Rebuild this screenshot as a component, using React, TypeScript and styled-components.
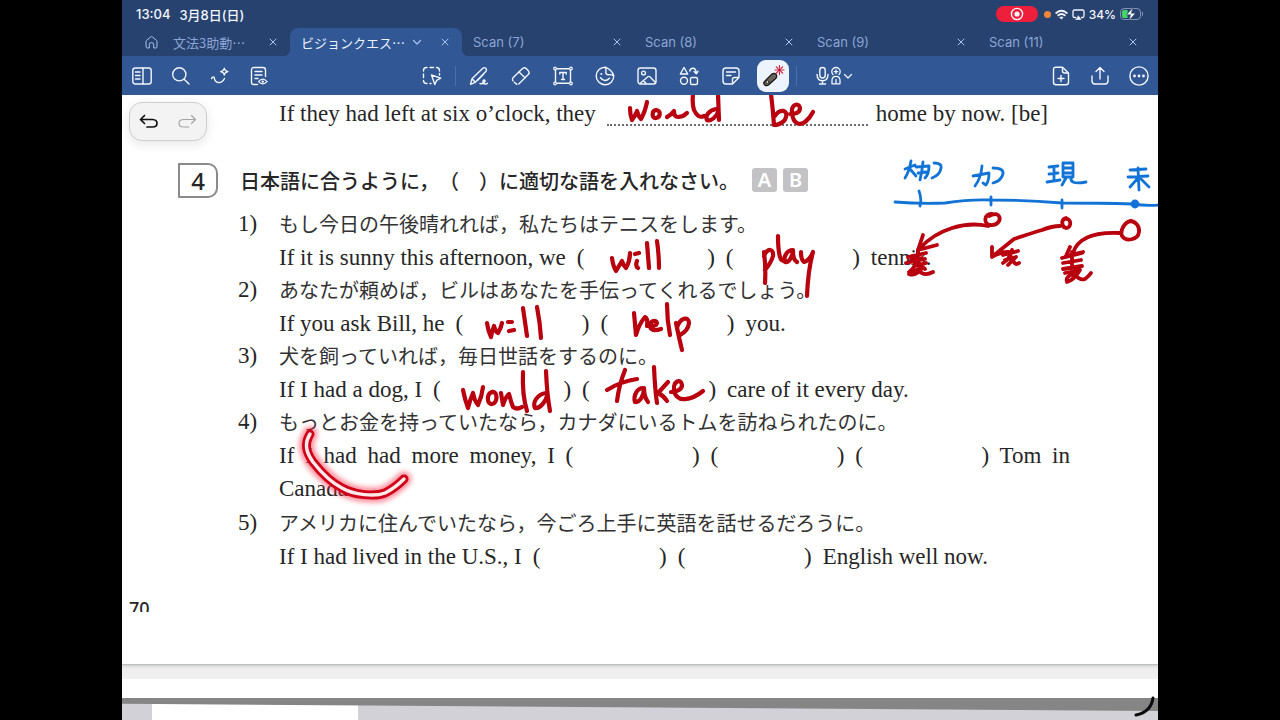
import React from "react";
import styled, { createGlobalStyle, css } from "styled-components";

const GlobalStyle = createGlobalStyle`
  * { box-sizing: border-box; }
  body { margin: 0; background: #000; }
  button { font: inherit; color: inherit; background: none; border: 0; padding: 0; }
`;

const uiFont = `Inter, "Noto Sans CJK JP", sans-serif`;
const jpFont = `"Noto Sans CJK JP", sans-serif`;
const bookFont = `"Liberation Serif", "Noto Sans CJK JP", serif`;

const Screen = styled.div`
  display: flex;
  flex-direction: column;
  max-width: 1036px;
  height: 100vh;
  min-height: 720px;
  margin: 0 auto;
  overflow: hidden;
  background: #fff;
`;

const Header = styled.header`
  flex: none;
  background: #28426f;
  color: #f2f6fd;
  font-family: ${uiFont};
`;

const StatusBar = styled.div`
  display: flex;
  align-items: center;
  justify-content: space-between;
  height: 28px;
  padding: 0 14px;
  font-size: 13px;
  font-weight: 500;
`;

const StatusGroup = styled.div<{ $gap: number }>`
  display: flex;
  align-items: center;
  gap: ${(p) => p.$gap}px;
`;

const RecordPill = styled.button`
  display: grid;
  place-items: center;
  width: 42px;
  height: 16px;
  margin-right: 2px;
  border-radius: 8px;
  background: #ee1f3b;
`;

const MicDot = styled.span`
  width: 7px;
  height: 7px;
  border-radius: 50%;
  background: #f0883a;
`;

const Charge = styled.span`
  font-size: 12px;
`;

const TabBar = styled.nav`
  display: grid;
  grid-template-columns: 168fr repeat(5, 172fr);
  height: 28px;
  padding-right: 8px;
`;

const flare = css`
  content: "";
  position: absolute;
  bottom: 0;
  width: 6px;
  height: 6px;
`;

const Tab = styled.div<{ $active?: boolean; $home?: boolean }>`
  position: relative;
  display: flex;
  align-items: center;
  gap: ${(p) => (p.$home ? 14 : 7)}px;
  min-width: 0;
  padding: 0 12px 0 ${(p) => (p.$home ? 22 : 11)}px;
  border-radius: 8px 8px 0 0;
  font-size: 13px;
  color: ${(p) => (p.$active ? "#eaf3ff" : "#8aa5d6")};
  background: ${(p) => (p.$active ? "#315795" : "transparent")};
  ${(p) =>
    p.$active &&
    css`
      &::before {
        ${flare}
        right: 100%;
        background: radial-gradient(circle at 0 0, transparent 6px, #315795 6px);
      }
      &::after {
        ${flare}
        left: 100%;
        background: radial-gradient(circle at 100% 0, transparent 6px, #315795 6px);
      }
    `}
`;

const TabName = styled.button<{ $jp?: boolean }>`
  white-space: nowrap;
  font-family: ${(p) => (p.$jp ? jpFont : uiFont)};
`;

const TabIconButton = styled.button<{ $end?: boolean }>`
  display: grid;
  place-items: center;
  flex: none;
  margin-left: ${(p) => (p.$end ? "auto" : "0")};
  color: #a9c4ee;
`;

const Toolbar = styled.div`
  display: grid;
  grid-template-columns: 1fr auto 1fr;
  align-items: center;
  height: 39px;
  background: #315795;
`;

const ToolGroup = styled.div<{ $place?: "start" | "end" | "center" }>`
  display: flex;
  align-items: center;
  justify-self: ${(p) => p.$place ?? "start"};
`;

const Tool = styled.button<{ $width?: number }>`
  display: flex;
  align-items: center;
  justify-content: center;
  width: ${(p) => p.$width ?? 39}px;
  height: 39px;
`;

const ActiveTool = styled.span`
  display: grid;
  place-items: center;
  width: 32px;
  height: 32px;
  border-radius: 9px;
  background: #eef4fd;
`;

const Divider = styled.span`
  width: 1px;
  height: 20px;
  margin: 0 2px;
  background: #4c70ad;
`;

const Canvas = styled.main`
  position: relative;
  flex: 1;
  overflow: hidden;
  background: #efefef;
`;

const Sheet = styled.article`
  height: 570px;
  padding: 2px 88px 0 116px;
  background: #fff;
  border-bottom: 1px solid #bcc0be;
  box-shadow: 0 1px 3px #c4c4c4;
  color: #262626;
  font-family: ${bookFont};
  font-size: 23px;
  line-height: 33px;
`;

const Sentence = styled.p`
  display: flex;
  gap: 11px;
  margin: 0;
  line-height: 31px;
  white-space: nowrap;
`;

const Spread = styled.p`
  margin: 0;
  line-height: 31px;
  text-align: justify;
  text-align-last: justify;
`;

const LastLine = styled.p`
  margin: 0;
  line-height: 35px;
`;

const Carried = styled.div`
  padding: 1px 0 1px 41px;
`;

const DottedBlank = styled.span`
  width: 261px;
  height: 28px;
  margin-right: -3px;
  border-bottom: 2px dotted #6d6d6d;
`;

const BlankBox = styled.span<{ $wide?: boolean }>`
  display: inline-flex;
  justify-content: space-between;
  width: ${(p) => (p.$wide ? 138 : 134)}px;
`;

const Question = styled.section`
  margin-top: 32px;
`;

const QuestionHead = styled.div`
  display: flex;
  align-items: center;
  height: 36px;
  margin-left: -60px;
`;

const QuestionNumber = styled.span`
  display: grid;
  place-items: center;
  width: 40px;
  height: 35px;
  margin-right: 22px;
  border: 2px solid #8a8a8a;
  border-radius: 1px 10px 10px 1px;
  font-family: "Noto Sans", sans-serif;
  font-size: 24px;
  font-weight: 500;
  line-height: 31px;
`;

const QuestionTitle = styled.h2`
  margin: 0;
  font-family: ${jpFont};
  font-size: 20px;
  font-weight: 500;
  text-spacing-trim: space-all;
`;

const Level = styled.span`
  display: grid;
  place-items: center;
  width: 25px;
  height: 24px;
  margin-right: 6px;
  border-radius: 3px;
  background: #c3c3c6;
  color: #fff;
  font-family: "Noto Sans", sans-serif;
  font-size: 20px;
  font-weight: 600;
  line-height: 24px;
`;

const Levels = styled.span`
  display: flex;
  margin-left: 13px;
`;

const Items = styled.ol`
  margin: 9px 0 0;
  padding: 0;
  list-style: none;
`;

const Item = styled.li`
  display: grid;
  grid-template-columns: 41px 1fr;
`;

const Japanese = styled.p`
  margin: 0;
  height: 35px;
  color: #333;
  font-family: ${jpFont};
  font-size: 20px;
  font-weight: 400;
  white-space: nowrap;
`;

const PageNumber = styled.div`
  height: 12px;
  margin: 28px 0 0 -109px;
  overflow: hidden;
  font-family: "Noto Sans", sans-serif;
  font-size: 18px;
  font-weight: 500;
  line-height: 16px;
`;

const NextSheet = styled.section`
  margin-top: 14px;
  padding-top: 19px;
  background: #fff;
`;

const ScanEdge = styled.div`
  height: 13px;
  background: #858585;
  clip-path: polygon(0 0, 100% 0, 100% 100%, 0 45%);
`;

const ScanBody = styled.div`
  height: 60px;
  margin-top: -13px;
  padding: 5px 0 0 30px;
  background: #d3d1d8;
`;

const ScanPaper = styled.div`
  width: 206px;
  height: 55px;
  background: #fff;
`;

const EdgeLayer = styled.div`
  position: relative;
  z-index: 1;
`;

const UndoPill = styled.div`
  position: absolute;
  top: 7px;
  left: 7px;
  display: flex;
  align-items: center;
  justify-content: space-around;
  width: 78px;
  height: 39px;
  border: 1px solid #cfcfcf;
  border-radius: 13px;
  background: #f3f3f3;
  box-shadow: 0 3px 12px rgba(0, 0, 0, 0.1);
  z-index: 3;
`;

const InkLayer = styled.svg`
  position: absolute;
  top: 0;
  left: 0;
  z-index: 2;
  pointer-events: none;
`;

const Glyph = styled.svg`
  display: block;
  flex: none;
  fill: none;
  stroke: currentColor;
  stroke-linecap: round;
  stroke-linejoin: round;
`;

type IconProps = { size?: number; weight?: number; children: React.ReactNode };
const Icon = ({ size = 20, weight = 1.4, children }: IconProps) => (
  <Glyph width={size} height={size} viewBox={`0 0 ${size} ${size}`} strokeWidth={weight} aria-hidden="true">
    {children}
  </Glyph>
);

const CloseIcon = () => (
  <Icon size={10} weight={1}>
    <path d="M2 2l6 6M8 2L2 8" />
  </Icon>
);

const ChevronIcon = () => (
  <Icon size={10} weight={1.2}>
    <path d="M1.500 3.500l3.500 3.500 3.500-3.500" />
  </Icon>
);

const Blank = ({ wide }: { wide?: boolean }) => (
  <BlankBox $wide={wide}>
    <span>(</span>
    <span>)</span>
  </BlankBox>
);

const scans = ["Scan (7)", "Scan (8)", "Scan (9)", "Scan (11)"];

const redStrokes = [
  // would be
  "M630 108Q630 115 632 120Q635 116 637 111Q638 116 641 119Q645 112 647 102",
  "M656 110C651 111 652 119 656 118C661 117 661 110 656 110",
  "M667 117Q671 115 674 111Q674 117 678 117Q683 117 687 113",
  "M693 94Q692 104 694 110Q698 119 704 116",
  "M718 94L719 120M716 109C709 110 705 116 707 120C711 122 717 116 718 112",
  "M771 94Q773 110 774 125M775 116C780 108 788 110 786 117C785 122 780 124 776 125",
  "M790 114Q800 114 800 108C799 102 791 104 792 113C793 124 800 126 805 122Q810 118 813 112",
  // will play
  "M612 258Q613 266 616 271Q619 266 622 261Q623 265 626 268Q630 261 630 253",
  "M635 254L639 253M637 261Q635 266 638 268",
  "M647 243L649 268M657 241Q659 255 659 268",
  "M764 252Q766 268 765 283M764 256C768 247 774 249 773 256Q771 263 765 270",
  "M778 236Q778 250 780 257Q781 261 785 261",
  "M793 250C787 250 783 257 785 262C789 263 792 257 793 251Q793 260 797 262",
  "M801 252Q801 260 804 262Q810 260 813 252Q808 270 807 296",
  // will help
  "M487 323Q488 331 491 337Q492 331 494 326Q495 331 498 333Q501 328 502 323",
  "M508 322L512 322M509 331L514 330",
  "M523 308L527 336M537 307Q540 322 541 338",
  "M634 313L636 335Q639 324 645 317Q648 318 647 326",
  "M648 326Q656 327 657 323C656 319 649 321 650 327Q652 332 661 329",
  "M667 304Q667 320 670 335",
  "M676 323Q679 338 682 350M677 328C680 317 689 316 689 323Q688 331 680 335",
  // would take
  "M463 390Q465 400 468 408Q470 400 473 393Q474 400 478 405Q482 396 483 387",
  "M492 392C486 394 487 405 492 404C498 403 498 391 492 392",
  "M501 393L503 405Q506 396 509 394Q511 402 513 407Q517 410 522 407",
  "M523 372Q522 395 527 411",
  "M546 371Q547 395 550 411M546 393C538 394 532 402 535 408C540 409 546 401 547 396",
  "M607 390Q622 381 637 379M625 370Q619 385 617 401",
  "M643 388C637 388 633 396 635 402C640 403 644 395 644 388Q644 397 648 402",
  "M654 367Q655 390 657 403M668 382L658 393Q664 396 667 401",
  "M671 392Q682 391 682 385C681 378 673 381 674 390C676 404 692 400 703 391",
];

const redNotes = [
  "M992 214C984 213 983 224 990 225C998 226 1002 219 998 215Q995 213 989 216",
  "M988 226C965 221 938 229 920 248M923 235L918 250L937 245",
  "M908 257L926 253M906 263L925 259M918 250Q918 266 909 272M913 258L925 269M915 266L926 263M910 273L923 267Q916 277 909 274M918 270Q924 277 933 272M911 260L922 258",
  "M1066 218C1061 219 1061 227 1066 228C1072 228 1072 217 1064 219",
  "M1060 226Q1052 226 1042 230Q1032 233 1014 239L993 256M992 247L992 257Q1000 252 1009 252",
  "M1003 255L1018 251M1012 250Q1011 258 1003 263M1005 260L1016 257L1008 265L1013 260Q1015 266 1019 263",
  "M1131 221C1124 222 1120 231 1122 236C1126 242 1138 240 1139 232C1140 226 1135 221 1130 221",
  "M1120 233C1098 232 1078 236 1073 253M1070 247L1066 256L1083 252",
  "M1062 258L1082 253M1063 263L1081 260M1063 269L1082 266M1072 252L1072 272M1065 273L1080 270Q1074 280 1067 282Q1065 276 1074 274Q1080 281 1085 279Q1089 276 1091 273",
];

const blueNotes = [
  "M895 202Q920 204 945 203Q970 199 992 200Q1025 200 1062 203Q1100 203 1133 204Q1145 206 1160 205",
  "M919 191Q922 199 920 206M991 197V205M1062 200V208",
  "M905 169L915 165M911 161Q909 172 905 178M910 169L916 176M916 167L929 166Q929 174 925 178M923 162Q922 172 920 180M918 173L926 172M934 163Q942 163 941 168Q940 175 932 178",
  "M973 176L989 173Q989 181 986 185L983 183M982 166Q981 178 975 186M993 168Q1004 168 1003 174Q1001 181 993 183",
  "M1049 167L1058 166M1049 174L1058 173M1047 182L1060 180M1054 167V181M1063 163V177M1063 163H1073V177M1063 168H1072M1063 173H1072M1063 177H1073M1066 178L1062 185M1071 178Q1070 185 1086 182",
  "M1130 170L1146 169M1128 177L1148 176M1138 168L1139 190M1138 178L1130 187M1140 178L1149 187",
];

const laser = "M310 434C304 444 306 452 313 462C324 476 334 484 342 488C354 495 375 497 385 493C393 489 398 485 404 479";

export default function App() {
  return (
    <>
      <GlobalStyle />
      <Screen>
        <Header>
          <StatusBar>
            <StatusGroup $gap={9}>
              <span>13:04</span>
              <span>3月8日(日)</span>
            </StatusGroup>
            <StatusGroup $gap={4}>
              <RecordPill aria-label="画面収録">
                <Icon size={14} weight={1.4}>
                  <circle cx="7" cy="7" r="5.6" />
                  <circle cx="7" cy="7" r="2.6" fill="currentColor" stroke="none" />
                </Icon>
              </RecordPill>
              <MicDot />
              <Icon size={13} weight={1.8}>
                <path d="M1.2 5Q6.500.6 11.800 5M3.300 7.300Q6.500 4.600 9.700 7.300" />
                <path d="M4.800 9.400L6.500 11.200L8.200 9.400Q6.500 8 4.800 9.400Z" fill="currentColor" strokeWidth="0.5" />
              </Icon>
              <Icon size={13} weight={1.300}>
                <path d="M3.500 9.500H2.500Q1 9.500 1 8V3.500Q1 2 2.500 2H10.500Q12 2 12 3.500V8Q12 9.500 10.500 9.500H9.500" />
                <path d="M6.500 8L9 11.500H4Z" fill="currentColor" strokeWidth="0.6" />
              </Icon>
              <Charge>34%</Charge>
              <Icon size={24} weight={1}>
                <rect x="0.5" y="6.500" width="20" height="11" rx="3.500" stroke="#7f93b4" />
                <path d="M22.500 10.500v3" stroke="#7f93b4" />
                <path d="M4 8H7.500V16H4Q2 16 2 14V10Q2 8 4 8Z" fill="#43d662" stroke="none" />
                <path d="M13 5.500L6.500 12.800H10.500L9 18.500L15.500 11.200H11.500Z" fill="#fff" stroke="#28426f" strokeWidth="0.6" />
              </Icon>
            </StatusGroup>
          </StatusBar>
          <TabBar aria-label="書類">
            <Tab $home>
              <TabIconButton aria-label="ホーム">
                <Icon size={15} weight={1}>
                  <path d="M2 6.500Q2 5.800 2.600 5.300L6.700 1.900Q7.500 1.300 8.300 1.900L12.400 5.300Q13 5.800 13 6.500V11.500Q13 13 11.500 13H9.700V9.500Q9.700 7.600 7.500 7.600Q5.300 7.600 5.300 9.500V13H3.500Q2 13 2 11.500Z" />
                </Icon>
              </TabIconButton>
              <TabName $jp>文法3助動…</TabName>
              <TabIconButton $end aria-label="閉じる">
                <CloseIcon />
              </TabIconButton>
            </Tab>
            <Tab $active>
              <TabName $jp>ビジョンクエス…</TabName>
              <TabIconButton aria-label="メニュー">
                <ChevronIcon />
              </TabIconButton>
              <TabIconButton $end aria-label="閉じる">
                <CloseIcon />
              </TabIconButton>
            </Tab>
            {scans.map((name) => (
              <Tab key={name}>
                <TabName>{name}</TabName>
                <TabIconButton $end aria-label="閉じる">
                  <CloseIcon />
                </TabIconButton>
              </Tab>
            ))}
          </TabBar>
          <Toolbar>
            <ToolGroup>
              <Tool aria-label="サイドバー">
                <Icon>
                  <rect x="0.8" y="2" width="18.400" height="16" rx="2.500" />
                  <path d="M11 2V18M3.500 6H8M3.500 9.500H8M3.500 13H8" />
                </Icon>
              </Tool>
              <Tool aria-label="検索">
                <Icon>
                  <circle cx="8.300" cy="8.300" r="6.600" />
                  <path d="M13.200 13.200L18 18" />
                </Icon>
              </Tool>
              <Tool aria-label="AI">
                <Icon>
                  <path d="M1.500 12.500Q3.800 9.500 4.300 12C5 17.500 11.500 18.500 14.500 12.500" />
                  <path d="M14.300 2.200Q14.700 5.300 18 5.700Q14.700 6.100 14.300 9.200Q13.900 6.100 10.600 5.700Q13.900 5.300 14.300 2.200Z" strokeWidth="1.200" />
                </Icon>
              </Tool>
              <Tool aria-label="ページ表示">
                <Icon>
                  <path d="M8.500 18.500H5Q2.500 18.500 2.500 16V4Q2.500 1.500 5 1.500H14Q16.500 1.500 16.500 4V10.500M6 5.500H13M6 9H13M6 12.500H9" />
                  <path d="M9.500 15.700Q13.800 10.700 18.100 15.700Q13.800 20.200 9.500 15.700Z" strokeWidth="1.200" />
                  <circle cx="13.800" cy="15.600" r="1.200" fill="currentColor" stroke="none" />
                </Icon>
              </Tool>
            </ToolGroup>
            <ToolGroup $place="center">
              <Tool $width={42} aria-label="選択">
                <Icon>
                  <path d="M1.500 5V4.500Q1.500 1.500 4.500 1.500H5M8 1.500H11.500M14.500 1.500Q17.500 1.500 17.500 4.500V5M1.500 8V11.500M17.500 7.500V9M1.500 14.500Q1.500 17.500 4.500 17.500H5M8 17.500H9" />
                  <path d="M9.500 9L18.700 12.200L14.700 14.300L12.800 18.500Z" />
                </Icon>
              </Tool>
              <Divider />
              <Tool $width={42} aria-label="ペン">
                <Icon>
                  <path d="M1.500 18.300L3 12.800L13.800 2.200Q15.300 1 16.800 2.300Q18.200 3.800 17 5.300L6.300 16.300ZM3 12.800L6.300 16.300M9 14L14.500 8.200" />
                  <path d="M11 17.500Q14 18.500 16 15.500Q16.300 13.800 15 14Q13 15 14.500 17.500Q16 18.800 18.300 17.300" />
                </Icon>
              </Tool>
              <Tool $width={42} aria-label="消しゴム">
                <Icon>
                  <path d="M2 11.800L11.800 2.300Q13.500 1 15.200 2.500L17.500 4.900Q18.800 6.500 17.500 8.200L8 17.700Q6.200 19 4.600 17.500L2.200 15.200Q.8 13.500 2 11.800Z" strokeDasharray="38 2 3 2 3 2 3 2 40" />
                  <path d="M8 6L14 11.800" />
                </Icon>
              </Tool>
              <Tool $width={42} aria-label="テキスト">
                <Icon>
                  <path d="M2.500 2.700H17.500V17.300H2.500ZM6.800 8V6.500H13.200V8M10 6.500V13.500M8.500 13.500H11.500" />
                  <g fill="#315795" strokeWidth="1.200">
                    <circle cx="2" cy="2.500" r="1.300" />
                    <circle cx="18" cy="2.500" r="1.300" />
                    <circle cx="2" cy="17.500" r="1.300" />
                    <circle cx="18" cy="17.500" r="1.300" />
                  </g>
                </Icon>
              </Tool>
              <Tool $width={42} aria-label="ステッカー">
                <Icon>
                  <path d="M10.500 1.200A8.800 8.800 0 1 0 18.800 9.800Q17 4 10.500 1.200ZM10.500 1.200Q11.500 4.500 10.800 6.300Q10.800 8.500 13 8.700Q16 8.300 18.800 9.800" />
                  <path d="M5.500 11.800Q9.500 17 14.500 12.200" />
                  <circle cx="6.300" cy="8" r="1" fill="currentColor" stroke="none" />
                </Icon>
              </Tool>
              <Tool $width={42} aria-label="画像">
                <Icon>
                  <rect x="1" y="2" width="18" height="16" rx="2.500" />
                  <circle cx="6.500" cy="7" r="1.900" />
                  <path d="M3 17.500L10.800 10.800Q11.800 10 12.800 10.800L18.500 16.500M9 17.500L6.500 14.500" />
                </Icon>
              </Tool>
              <Tool $width={42} aria-label="図形">
                <Icon>
                  <path d="M5 1.500L8.700 8H1.300ZM10.800 5Q11.500 2 14.500 2.300Q17 2.800 17.300 7.500M15 5.500L17.300 7.800L19 5.300" />
                  <circle cx="5" cy="14.800" r="3.500" />
                  <rect x="11.500" y="11.500" width="7" height="7" rx="1.500" />
                </Icon>
              </Tool>
              <Tool $width={42} aria-label="メモ">
                <Icon>
                  <path d="M11.500 18H5Q2 18 2 15V5Q2 2 5 2H15Q18 2 18 5V11.500L11.500 18V13.500Q11.500 11.500 13.500 11.500H18M5.500 6H14.500M5.500 9.500H10" />
                </Icon>
              </Tool>
              <Tool $width={42} aria-label="レーザーポインター" aria-pressed="true">
                <ActiveTool>
                  <Icon size={24} weight={1.300}>
                    <path d="M3.500 17.500L11 10Q13.300 8.500 15 10.200Q16.500 12 15.200 14L7.500 21Q5.500 22.500 3.500 20.700Q2 19 3.500 17.500Z" fill="#6c655c" stroke="#1c1a18" />
                    <circle cx="6.500" cy="18" r="1.500" fill="#d8d4cc" stroke="#1c1a18" strokeWidth="0.8" />
                    <path d="M18.500 1.500V4M18.500 8V10.500M14 6H16.500M20.500 6H23M15.300 2.800L17 4.500M20 7.500L21.700 9.200M21.700 2.800L20 4.500M17 7.500L15.300 9.200" stroke="#cf2a3c" strokeWidth="1.200" />
                    <circle cx="18.500" cy="6" r="1.500" fill="#c4102a" stroke="none" />
                  </Icon>
                </ActiveTool>
              </Tool>
              <Divider />
              <Tool $width={70} aria-label="録音">
                <Icon size={28}>
                  <rect x="4.800" y="5.500" width="5.400" height="10.500" rx="2.700" />
                  <path d="M2 12.500Q2.300 18.800 7.500 18.800Q12.700 18.800 13 12.500M7.500 18.800V22M4.500 22H10.500" />
                  <path d="M18 12.500Q16.800 11.300 16.800 9.700A4.200 4.200 0 0 1 25.200 9.700Q25.200 11.300 24 12.500M21 8V11.500M19.300 9.700H22.700M17 21.800V18.500Q17 14.300 21 14.300Q25 14.300 25 18.500V21.800ZM21 17.500V21.500" strokeWidth="1.300" />
                </Icon>
                <ChevronIcon />
              </Tool>
            </ToolGroup>
            <ToolGroup $place="end">
              <Tool aria-label="ページ追加">
                <Icon>
                  <path d="M11.500 1.200H5Q2.500 1.200 2.500 3.700V16.300Q2.500 18.800 5 18.800H15Q17.500 18.800 17.500 16.300V7ZM11.500 1.200V5Q11.500 7 13.500 7H17.500M10 9.500V15.500M7 12.500H13" />
                </Icon>
              </Tool>
              <Tool aria-label="共有">
                <Icon>
                  <path d="M10 13V1.800M6 5.500L10 1.500L14 5.500M2 10V15Q2 18 5 18H15Q18 18 18 15V10" />
                </Icon>
              </Tool>
              <Tool aria-label="その他">
                <Icon>
                  <circle cx="10" cy="10" r="9.100" />
                  <g fill="currentColor" stroke="none">
                    <circle cx="5.500" cy="10" r="1.400" />
                    <circle cx="10" cy="10" r="1.400" />
                    <circle cx="14.500" cy="10" r="1.400" />
                  </g>
                </Icon>
              </Tool>
            </ToolGroup>
          </Toolbar>
        </Header>

        <Canvas>
          <UndoPill>
            <button aria-label="取り消す">
              <Icon weight={1.700}>
                <path d="M5.500 3.500L1.500 7.500L5.500 11.500M1.500 7.500H13.500Q18 7.700 18 11.300Q18 15 13.500 15H8" stroke="#111" />
              </Icon>
            </button>
            <button aria-label="やり直す">
              <Icon weight={1.200}>
                <path d="M14.500 3.500L18.500 7.500L14.500 11.500M18.500 7.500H6.500Q2 7.700 2 11.300Q2 15 6.500 15H12" stroke="#a5a5a5" />
              </Icon>
            </button>
          </UndoPill>

          <Sheet>
            <Carried>
              <Sentence>
                <span>If they had left at six o’clock, they</span>
                <DottedBlank />
                <span>home by now. [be]</span>
              </Sentence>
            </Carried>
            <Question>
              <QuestionHead>
                <QuestionNumber>4</QuestionNumber>
                <QuestionTitle>日本語に合うように，（　）に適切な語を入れなさい。</QuestionTitle>
                <Levels>
                  <Level>A</Level>
                  <Level>B</Level>
                </Levels>
              </QuestionHead>
              <Items>
                <Item>
                  <span>1)</span>
                  <div>
                    <Japanese>もし今日の午後晴れれば，私たちはテニスをします。</Japanese>
                    <Sentence>
                      <span>If it is sunny this afternoon, we</span>
                      <Blank wide />
                      <Blank />
                      <span>tennis.</span>
                    </Sentence>
                  </div>
                </Item>
                <Item>
                  <span>2)</span>
                  <div>
                    <Japanese>あなたが頼めば，ビルはあなたを手伝ってくれるでしょう。</Japanese>
                    <Sentence>
                      <span>If you ask Bill, he</span>
                      <Blank />
                      <Blank />
                      <span>you.</span>
                    </Sentence>
                  </div>
                </Item>
                <Item>
                  <span>3)</span>
                  <div>
                    <Japanese>犬を飼っていれば，毎日世話をするのに。</Japanese>
                    <Sentence>
                      <span>If I had a dog, I</span>
                      <Blank wide />
                      <Blank />
                      <span>care of it every day.</span>
                    </Sentence>
                  </div>
                </Item>
                <Item>
                  <span>4)</span>
                  <div>
                    <Japanese>もっとお金を持っていたなら，カナダにいるトムを訪ねられたのに。</Japanese>
                    <Spread>
                      If I had had more money, I <Blank /> <Blank /> <Blank /> Tom in
                    </Spread>
                    <LastLine>Canada.</LastLine>
                  </div>
                </Item>
                <Item>
                  <span>5)</span>
                  <div>
                    <Japanese>アメリカに住んでいたなら，今ごろ上手に英語を話せるだろうに。</Japanese>
                    <Sentence>
                      <span>If I had lived in the U.S., I</span>
                      <Blank />
                      <Blank />
                      <span>English well now.</span>
                    </Sentence>
                  </div>
                </Item>
              </Items>
            </Question>
            <PageNumber>70</PageNumber>
          </Sheet>

          <NextSheet>
            <EdgeLayer>
              <ScanEdge />
            </EdgeLayer>
            <ScanBody>
              <ScanPaper />
            </ScanBody>
          </NextSheet>

          <InkLayer
            width="1036"
            height="625"
            viewBox="122 95 1036 625"
            fill="none"
            strokeLinecap="round"
            strokeLinejoin="round"
            role="img"
            aria-label="手書きメモ"
          >
            <defs>
              <filter id="glow" x="-20%" y="-30%" width="140%" height="160%">
                <feGaussianBlur stdDeviation="2.5" />
              </filter>
            </defs>
            <g stroke="#b8000f" strokeWidth="4.200">
              {redStrokes.map((d) => (
                <path key={d} d={d} />
              ))}
            </g>
            <g stroke="#b8000f" strokeWidth="3.800">
              {redNotes.map((d) => (
                <path key={d} d={d} />
              ))}
            </g>
            <g stroke="#1273d6" strokeWidth="2.800">
              {blueNotes.map((d) => (
                <path key={d} d={d} />
              ))}
              <circle cx="1135" cy="204" r="3" fill="#1273d6" />
            </g>
            <path d={laser} stroke="#ff3048" strokeWidth="15" opacity="0.55" filter="url(#glow)" />
            <path d={laser} stroke="#cf0018" strokeWidth="9" />
            <path d={laser} stroke="#fde8ea" strokeWidth="3.500" />
            <path d="M1153 698Q1151 712 1136 715" stroke="#0b0b0b" strokeWidth="3" />
          </InkLayer>
        </Canvas>
      </Screen>
    </>
  );
}
